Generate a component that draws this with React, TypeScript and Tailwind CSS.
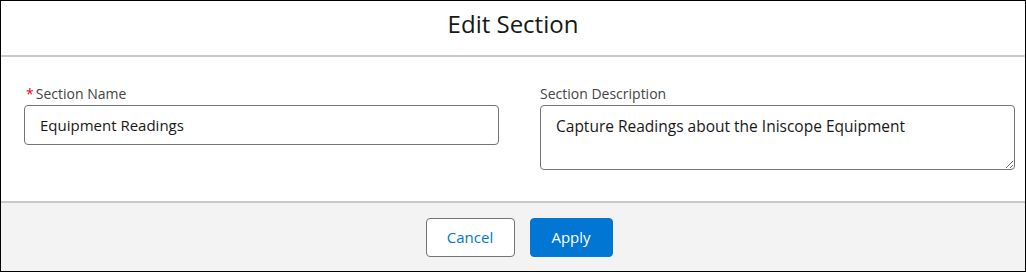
import React from "react";

export default function App() {
  return (
    <div
      className="w-[1026px] h-[272px] border border-black bg-white flex flex-col text-[#181818]"
      style={{ fontFamily: '"Open Sans", "Noto Sans", Arial, sans-serif' }}
    >
      <div className="h-[56px] shrink-0 flex items-center justify-center border-b-2 border-[#c9c9c9]">
        <h1 className="text-[24px] leading-none font-normal pb-[8px]">Edit Section</h1>
      </div>
      <div className="flex-1 flex pl-[23px] pr-[10px] pt-[27px] gap-[41px]">
        <div className="flex-1 flex flex-col">
          <label className="text-[14px] leading-[20px] text-[#444444] flex items-center">
            <span className="text-[#ea001e] mr-[2px] ml-[2px]">*</span>Section Name
          </label>
          <div className="mt-[1px] h-[40px] border border-[#747474] rounded-[4px] flex items-center px-[15px] text-[15px]">
            Equipment Readings
          </div>
        </div>
        <div className="flex-1 flex flex-col">
          <label className="text-[14px] leading-[20px] text-[#444444]">Section Description</label>
          <textarea
            readOnly
            defaultValue="Capture Readings about the Iniscope Equipment"
            className="mt-[1px] h-[65px] border border-[#747474] rounded-[4px] px-[15px] pt-[8px] text-[15.5px] leading-[24px] resize-y outline-none text-[#181818]"
            style={{ fontFamily: '"Open Sans", "Noto Sans", Arial, sans-serif' }}
          />
        </div>
      </div>
      <div className="h-[70px] shrink-0 bg-[#f3f3f3] border-t-2 border-[#c9c9c9] flex items-center justify-center gap-[15px] pl-[12px]">
        <button className="h-[39px] w-[89px] bg-white border border-[#747474] rounded-[4px] text-[#0176d3] text-[15px]">
          Cancel
        </button>
        <button className="h-[39px] w-[83px] bg-[#0176d3] border border-[#0176d3] rounded-[4px] text-white text-[15px]">
          Apply
        </button>
      </div>
    </div>
  );
}
